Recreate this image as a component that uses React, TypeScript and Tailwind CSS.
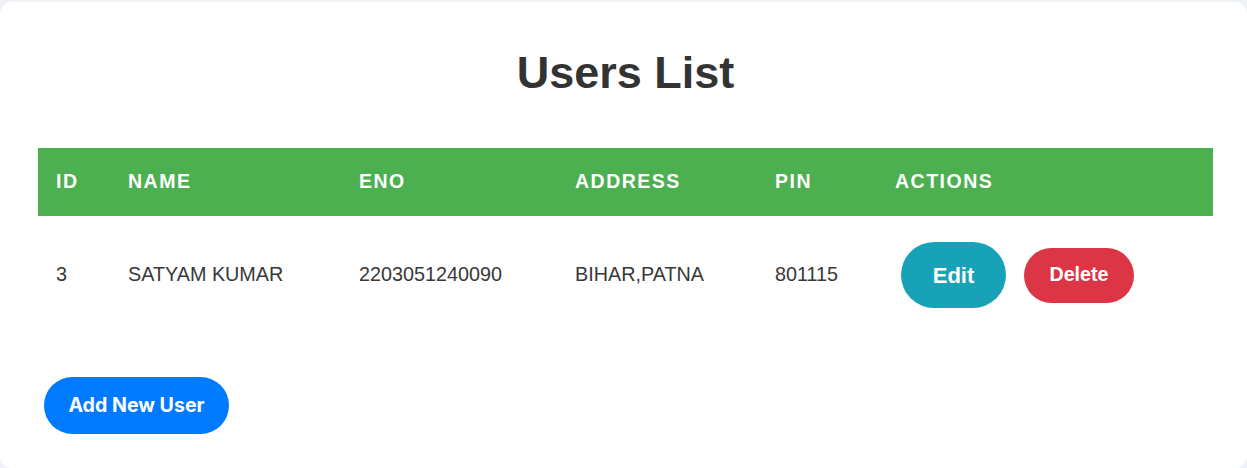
import React from "react";

const users = [
  { id: 3, name: "SATYAM KUMAR", eno: "2203051240090", address: "BIHAR,PATNA", pin: "801115" },
];

const cols = [
  { label: "ID", w: "w-[72px]" },
  { label: "NAME", w: "w-[231px]" },
  { label: "ENO", w: "w-[216px]" },
  { label: "ADDRESS", w: "w-[200px]" },
  { label: "PIN", w: "w-[120px]" },
  { label: "ACTIONS", w: "w-[336px]" },
];

export default function App() {
  return (
    <div className="min-h-[468px] bg-[#eef1f6] pt-[2px] font-['Liberation_Sans',Arial,sans-serif]">
      <div className="min-h-[466px] rounded-[12px] bg-white pl-[38px] pr-[34px] pt-[45px] pb-[34px]">
        <h1 className="text-center text-[45px] leading-[52px] font-bold text-[#333333]">Users List</h1>
        <table className="mt-[49px] w-[1175px] table-fixed border-collapse">
          <thead>
            <tr className="h-[68px] bg-[#4caf50]">
              {cols.map((c) => (
                <th
                  key={c.label}
                  className={`${c.w} pl-[18px] text-left align-middle text-[19.5px] font-bold tracking-[1.5px] text-white`}
                >
                  {c.label}
                </th>
              ))}
            </tr>
          </thead>
          <tbody>
            {users.map((u) => (
              <tr key={u.id} className="h-[118px] text-[19.8px] text-[#383838]">
                <td className="pl-[18px] align-middle">{u.id}</td>
                <td className="pl-[18px] align-middle">{u.name}</td>
                <td className="pl-[18px] align-middle">{u.eno}</td>
                <td className="pl-[18px] align-middle">{u.address}</td>
                <td className="pl-[18px] align-middle">{u.pin}</td>
                <td className="pl-[18px] align-middle">
                  <div className="flex items-center">
                    <button className="ml-[6px] flex h-[66px] w-[105px] items-center justify-center rounded-full bg-[#17a2b8] text-[22px] font-bold text-white">
                      Edit
                    </button>
                    <button className="ml-[18px] flex h-[55px] w-[110px] items-center justify-center rounded-full bg-[#dc3545] text-[19.7px] font-bold text-white">
                      Delete
                    </button>
                  </div>
                </td>
              </tr>
            ))}
          </tbody>
        </table>
        <button className="ml-[6px] mt-[43px] flex h-[57px] w-[185px] items-center justify-center rounded-full bg-[#007bff] font-['Inter',sans-serif] text-[19.6px] font-bold text-white">
          Add New User
        </button>
      </div>
    </div>
  );
}
